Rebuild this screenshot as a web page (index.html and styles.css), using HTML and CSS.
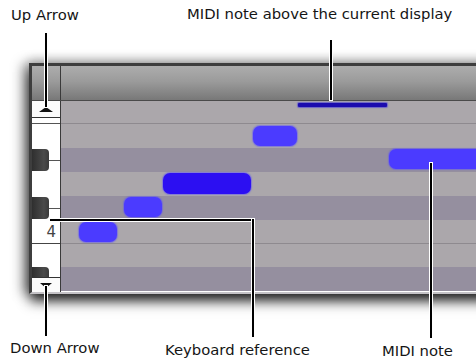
FILE: index.html
```html
<!DOCTYPE html>
<html lang="en">
<head>
    <meta charset="UTF-8">
    <title>MIDI Editor Keyboard</title>
    <link rel="stylesheet" href="styles.css">
</head>
<body>
    <div class="figure">
        <div class="panel">
            <div class="header">
                <div class="kb-head"></div>
                <div class="ruler"></div>
            </div>
            <div class="body">
                <div class="keys">
                    <div class="arrow-btn up"><span class="tri-up"></span></div>
                    <div class="key gap"></div>
                    <div class="key white e"></div>
                    <div class="key black-row"><span class="black"></span><span class="mid"></span></div>
                    <div class="key white d"></div>
                    <div class="key black-row"><span class="black"></span><span class="mid"></span></div>
                    <div class="key white c">4</div>
                    <div class="key white b"></div>
                    <div class="key black-row short"><span class="black"></span></div>
                    <div class="arrow-btn down"><span class="tri-down"></span></div>
                </div>
                <div class="grid">
                    <div class="row light r-a"></div>
                    <div class="row light r-b lined"></div>
                    <div class="row dark"></div>
                    <div class="row light"></div>
                    <div class="row dark"></div>
                    <div class="row light r-f"></div>
                    <div class="row light r-g lined"></div>
                    <div class="row dark"></div>

                    <!-- notes sit on the time/pitch canvas -->
                    <div class="note above" style="left:237px; top:2px; width:89px;"></div>
                    <div class="note" style="left:192px; top:25px; width:44px;"></div>
                    <div class="note" style="left:328px; top:48px; width:100px;"></div>
                    <div class="note sel" style="left:102px; top:72px; width:88px;"></div>
                    <div class="note" style="left:63px; top:96px; width:38px;"></div>
                    <div class="note" style="left:18px; top:121px; width:38px;"></div>
                </div>
            </div>
        </div>

        <!-- callouts -->
        <div class="label" style="left:11px; top:7px;">Up Arrow</div>
        <div class="label" style="left:187px; top:6px;">MIDI note above the current display</div>
        <div class="label" style="left:10px; top:340px;">Down Arrow</div>
        <div class="label" style="left:165px; top:342px;">Keyboard reference</div>
        <div class="label" style="left:382px; top:343px;">MIDI note</div>

        <div class="vline" style="left:45px; top:33px; height:74px;"></div>
        <div class="vline" style="left:330px; top:40px; height:60px;"></div>
        <div class="vline" style="left:45px; top:286px; height:50px;"></div>
        <div class="hline" style="left:50px; top:219px; width:204px;"></div>
        <div class="vline" style="left:252px; top:219px; height:118px;"></div>
        <div class="vline" style="left:430px; top:163px; height:175px;"></div>
    </div>
</body>
</html>
```

FILE: styles.css
```css
body {
    margin: 0;
    background: #fff;
    font-family: "DejaVu Sans", sans-serif;
}
.figure {
    position: relative;
    width: 476px;
    height: 362px;
    overflow: hidden;
    padding-top: 63px;
    box-sizing: border-box;
}
.panel {
    margin-left: 29px;
    width: 470px;
    border-top: 3px solid #3e3e3e;
    border-left: 3px solid #3e3e3e;
    border-bottom: 2px solid #c4c2c6;
    box-shadow: 0 8px 12px -1px rgba(0,0,0,0.85), -7px 0 11px rgba(0,0,0,0.35), 0 -5px 9px rgba(0,0,0,0.14);
    display: flex;
    flex-direction: column;
}
.header {
    display: flex;
    height: 34px;
    border-bottom: 1px solid #4a4a4a;
    background: linear-gradient(#adadad, #9b9b9b 45%, #787878);
}
.kb-head {
    width: 28px;
    border-right: 1px solid #3a3a3a;
}
.ruler {
    flex: 1;
}
.body {
    display: flex;
}
.keys {
    width: 28px;
    border-right: 1px solid #3a3a3a;
    background: #fff;
    display: flex;
    flex-direction: column;
}
.arrow-btn {
    display: flex;
    align-items: center;
    justify-content: center;
    background: #fbfbfb;
}
.arrow-btn.up {
    height: 16px;
    border-bottom: 1px solid #333;
}
.arrow-btn.down {
    height: 14px;
    border-top: 1px solid #333;
}
.tri-up {
    width: 0;
    height: 0;
    border-left: 7px solid transparent;
    border-right: 7px solid transparent;
    border-bottom: 5px solid #111;
    margin-top: 1px;
}
.tri-down {
    width: 0;
    height: 0;
    border-left: 6px solid transparent;
    border-right: 6px solid transparent;
    border-top: 5px solid #111;
}
.key {
    background: #fff;
}
.key.gap {
    height: 5px;
    border-bottom: 1px solid #555;
}
.key.e { height: 24px; }
.key.d { height: 24px; }
.key.b { height: 23px; }
.key.c {
    height: 23px;
    border-bottom: 1px solid #444;
    font-size: 15px;
    color: #444;
    text-align: right;
    padding-right: 4px;
    line-height: 24px;
}
.black-row {
    height: 24px;
    display: flex;
    align-items: center;
}
.black-row.short {
    height: 10px;
    align-items: flex-end;
}
.black {
    width: 17px;
    height: 22px;
    background: linear-gradient(90deg, #2f2f2f, #4a4a4a 70%, #3a3a3a);
    border-radius: 0 4px 4px 0;
}
.black-row.short .black {
    height: 10px;
    border-radius: 0 4px 0 0;
}
.mid {
    flex: 1;
    height: 1px;
    background: #555;
}
.grid {
    flex: 1;
    position: relative;
    display: flex;
    flex-direction: column;
    overflow: hidden;
}
.row {
    height: 24px;
}
.row.light { background: #aba7ab; }
.row.dark { background: #958f9f; }
.row.r-a { height: 22px; }
.row.r-f { height: 23px; }
.row.lined {
    border-top: 1px solid #8e8a8f;
}
.row.r-b { height: 24px; }
.row.r-g { height: 23px; }
.note {
    position: absolute;
    height: 20px;
    border-radius: 7px;
    background: #4b3bff;
    box-shadow: 0 0 1px 1px rgba(90,80,255,0.5);
}
.note.sel {
    height: 21px;
    background: #2c0ff2;
}
.note.above {
    height: 4px;
    border-radius: 1px;
    background: #1c0cae;
    box-shadow: 0 0 1px 1px rgba(70,60,220,0.6);
}
.label {
    position: absolute;
    font-size: 14.8px;
    line-height: 16px;
    color: #151515;
    white-space: nowrap;
}
.vline, .hline {
    position: absolute;
    background: #000;
    box-shadow: 0 0 0 1px #fff;
}
.vline { width: 2px; }
.hline { height: 2px; }
```
